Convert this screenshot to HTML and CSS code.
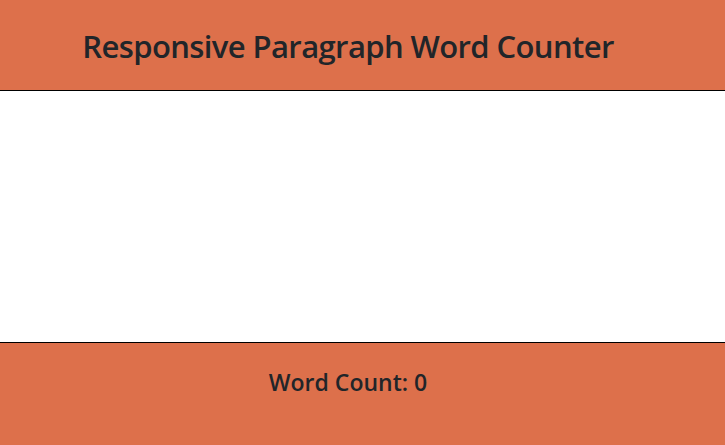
FILE: index.html
```html
<!DOCTYPE html>
<html>
<head>
<meta charset="utf-8">
<link rel="stylesheet" href="styles.css">
</head>
<body>
<header class="top">
  <h1 class="title">Responsive Paragraph Word Counter</h1>
</header>
<main class="editor">
  <textarea class="text-input"></textarea>
</main>
<footer class="bottom">
  <p class="count">Word Count: <span>0</span></p>
</footer>
</body>
</html>
```
FILE: styles.css
```css
html, body {
  margin: 0;
  padding: 0;
  height: 100%;
  overflow: hidden;
}
body {
  font-family: "Open Sans", "Noto Sans", sans-serif;
  color: #212529;
  background: #dd704b;
  display: flex;
  flex-direction: column;
}
.top {
  box-sizing: border-box;
  height: 91px;
  background: #dd704b;
  border-bottom: 1px solid #000;
  display: flex;
  align-items: center;
  justify-content: center;
  padding-right: 29px;
  padding-top: 4px;
}
.title {
  margin: 0;
  font-size: 31px;
  font-weight: 600;
  line-height: 1.2;
  letter-spacing: -0.6px;
}
.editor {
  height: 251px;
  background: #fff;
  border-bottom: 1px solid #000;
  display: flex;
}
.text-input {
  flex: 1;
  border: none;
  margin: 0;
  padding: 0;
  resize: none;
  outline: none;
  background: #fff;
}
.bottom {
  flex: 1;
  background: #dd704b;
  display: flex;
  justify-content: center;
  padding-right: 29px;
  padding-top: 26px;
}
.count {
  margin: 0;
  font-size: 23px;
  font-weight: 600;
  line-height: 1.2;
}
```
